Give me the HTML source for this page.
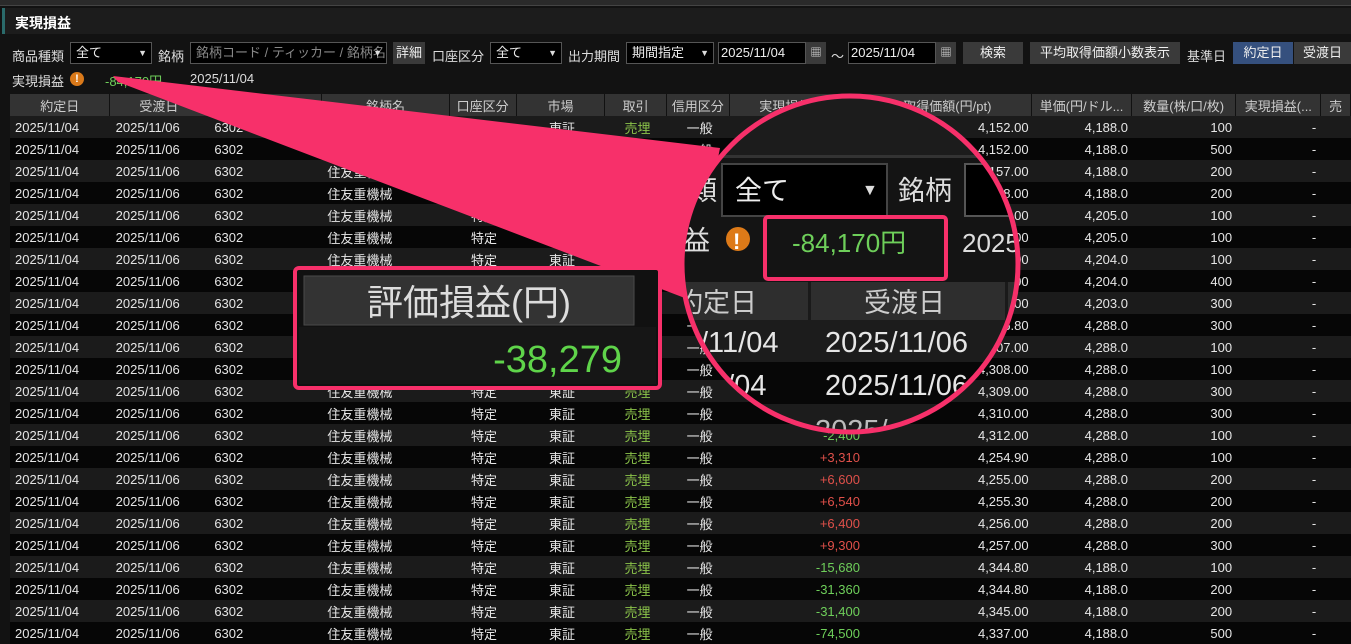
<!DOCTYPE html><html><head><meta charset="utf-8"><style>
*{margin:0;padding:0;box-sizing:border-box}
body{width:1351px;height:644px;background:#121212;font-family:"Liberation Sans","Noto Sans CJK JP",sans-serif;font-size:13px;color:#ddd;position:relative;overflow:hidden}
.a{position:absolute;white-space:nowrap}
.sel{position:absolute;background:#000;border:1px solid #555;color:#eee;height:22px;line-height:20px;padding-left:5px}
.dd:after{content:"▼";position:absolute;right:4px;font-size:9px;color:#ddd}
.btn{position:absolute;background:#3a3a3a;color:#eee;height:22px;line-height:22px;text-align:center}
table{position:absolute;left:10px;top:94px;border-collapse:collapse;table-layout:fixed}
th{background:#333;color:#ccc;font-weight:normal;height:22px;border-right:1px solid #111;font-size:13px;white-space:nowrap;overflow:hidden}
td{height:22px;padding:0 5px;white-space:nowrap;color:#e6e6e6}
tr:nth-child(odd) td{background:#1b1b1b}
tr:nth-child(even) td{background:#060606}
.r{text-align:right}.c{text-align:center}
.g{color:#6ecf5a}.rd{color:#e0504a}.u{color:#8bc34a}
</style></head><body>
<div class="a" style="left:0;top:0;width:1351px;height:6px;background:#2a2a2a;border-bottom:1px solid #444"></div>
<div class="a" style="left:2px;top:8px;width:1349px;height:26px;background:#1c1c1c;border-left:3px solid #2a6a6a"></div>
<div class="a" style="left:15px;top:13px;font-weight:bold;font-size:14px;color:#fff">実現損益</div>
<div class="a" style="left:12px;top:46px">商品種類</div>
<div class="sel dd" style="left:70px;top:42px;width:82px">全て</div>
<div class="a" style="left:158px;top:46px">銘柄</div>
<div class="sel dd" style="left:190px;top:42px;width:197px;color:#888;overflow:hidden">銘柄コード / ティッカー / 銘柄名</div>
<div class="btn" style="left:393px;top:42px;width:32px">詳細</div>
<div class="a" style="left:432px;top:46px">口座区分</div>
<div class="sel dd" style="left:490px;top:42px;width:72px">全て</div>
<div class="a" style="left:568px;top:46px">出力期間</div>
<div class="sel dd" style="left:626px;top:42px;width:88px">期間指定</div>
<div class="sel" style="left:718px;top:42px;width:88px;padding-left:2px">2025/11/04</div>
<div class="btn" style="left:806px;top:42px;width:20px;font-size:11px">▦</div>
<div class="a" style="left:831px;top:46px">～</div>
<div class="sel" style="left:848px;top:42px;width:88px;padding-left:2px">2025/11/04</div>
<div class="btn" style="left:936px;top:42px;width:20px;font-size:11px">▦</div>
<div class="btn" style="left:963px;top:42px;width:60px">検索</div>
<div class="btn" style="left:1030px;top:42px;width:150px">平均取得価額小数表示</div>
<div class="a" style="left:1187px;top:46px">基準日</div>
<div class="btn" style="left:1233px;top:42px;width:60px;background:#35507e">約定日</div>
<div class="btn" style="left:1294px;top:42px;width:57px">受渡日</div>
<div class="a" style="left:12px;top:71px">実現損益</div>
<div class="a" style="left:70px;top:72px;width:14px;height:14px;border-radius:7px;background:#d9791a;color:#fff;font-size:11px;text-align:center;line-height:14px;font-weight:bold">!</div>
<div class="a g" style="left:105px;top:71px">-84,170円</div>
<div class="a" style="left:190px;top:71px">2025/11/04</div>
<table>
<colgroup><col style="width:101px"><col style="width:99px"><col style="width:114px"><col style="width:129px"><col style="width:67px"><col style="width:90px"><col style="width:62px"><col style="width:63px"><col style="width:135px"><col style="width:170px"><col style="width:100px"><col style="width:105px"><col style="width:85px"><col style="width:30px"></colgroup>
<tr><th>約定日</th><th>受渡日</th><th>コード/ティッカー</th><th>銘柄名</th><th>口座区分</th><th>市場</th><th>取引</th><th>信用区分</th><th>実現損益(円)</th><th>取得価額(円/pt)</th><th>単価(円/ドル...</th><th>数量(株/口/枚)</th><th>実現損益(...</th><th>売</th></tr>
</table>
<table style="top:116px" id="t">
<colgroup><col style="width:101px"><col style="width:99px"><col style="width:114px"><col style="width:129px"><col style="width:67px"><col style="width:90px"><col style="width:62px"><col style="width:63px"><col style="width:135px"><col style="width:170px"><col style="width:100px"><col style="width:105px"><col style="width:85px"><col style="width:30px"></colgroup>
<tbody>
<tr><td>2025/11/04</td><td>2025/11/06</td><td>6302</td><td>住友重機械</td><td class="c">特定</td><td class="c">東証</td><td class="c u">売埋</td><td class="c">一般</td><td class="r g">-3,600</td><td class="r">4,152.00</td><td class="r">4,188.0</td><td class="r">100</td><td class="r">-</td><td></td></tr>
<tr><td>2025/11/04</td><td>2025/11/06</td><td>6302</td><td>住友重機械</td><td class="c">特定</td><td class="c">東証</td><td class="c u">売埋</td><td class="c">一般</td><td class="r rd">+18,000</td><td class="r">4,152.00</td><td class="r">4,188.0</td><td class="r">500</td><td class="r">-</td><td></td></tr>
<tr><td>2025/11/04</td><td>2025/11/06</td><td>6302</td><td>住友重機械</td><td class="c">特定</td><td class="c">東証</td><td class="c u">売埋</td><td class="c">一般</td><td class="r rd">+6,200</td><td class="r">4,157.00</td><td class="r">4,188.0</td><td class="r">200</td><td class="r">-</td><td></td></tr>
<tr><td>2025/11/04</td><td>2025/11/06</td><td>6302</td><td>住友重機械</td><td class="c">特定</td><td class="c">東証</td><td class="c u">売埋</td><td class="c">一般</td><td class="r rd">+6,000</td><td class="r">4,158.00</td><td class="r">4,188.0</td><td class="r">200</td><td class="r">-</td><td></td></tr>
<tr><td>2025/11/04</td><td>2025/11/06</td><td>6302</td><td>住友重機械</td><td class="c">特定</td><td class="c">東証</td><td class="c u">売埋</td><td class="c">一般</td><td class="r g">-1,700</td><td class="r">4,222.00</td><td class="r">4,205.0</td><td class="r">100</td><td class="r">-</td><td></td></tr>
<tr><td>2025/11/04</td><td>2025/11/06</td><td>6302</td><td>住友重機械</td><td class="c">特定</td><td class="c">東証</td><td class="c u">売埋</td><td class="c">一般</td><td class="r g">-1,700</td><td class="r">4,222.00</td><td class="r">4,205.0</td><td class="r">100</td><td class="r">-</td><td></td></tr>
<tr><td>2025/11/04</td><td>2025/11/06</td><td>6302</td><td>住友重機械</td><td class="c">特定</td><td class="c">東証</td><td class="c u">売埋</td><td class="c">一般</td><td class="r g">-1,800</td><td class="r">4,222.00</td><td class="r">4,204.0</td><td class="r">100</td><td class="r">-</td><td></td></tr>
<tr><td>2025/11/04</td><td>2025/11/06</td><td>6302</td><td>住友重機械</td><td class="c">特定</td><td class="c">東証</td><td class="c u">売埋</td><td class="c">一般</td><td class="r g">-7,200</td><td class="r">4,222.00</td><td class="r">4,204.0</td><td class="r">400</td><td class="r">-</td><td></td></tr>
<tr><td>2025/11/04</td><td>2025/11/06</td><td>6302</td><td>住友重機械</td><td class="c">特定</td><td class="c">東証</td><td class="c u">売埋</td><td class="c">一般</td><td class="r g">-5,700</td><td class="r">4,222.00</td><td class="r">4,203.0</td><td class="r">300</td><td class="r">-</td><td></td></tr>
<tr><td>2025/11/04</td><td>2025/11/06</td><td>6302</td><td>住友重機械</td><td class="c">特定</td><td class="c">東証</td><td class="c u">売埋</td><td class="c">一般</td><td class="r rd">+3,360</td><td class="r">4,276.80</td><td class="r">4,288.0</td><td class="r">300</td><td class="r">-</td><td></td></tr>
<tr><td>2025/11/04</td><td>2025/11/06</td><td>6302</td><td>住友重機械</td><td class="c">特定</td><td class="c">東証</td><td class="c u">売埋</td><td class="c">一般</td><td class="r rd">+8,100</td><td class="r">4,207.00</td><td class="r">4,288.0</td><td class="r">100</td><td class="r">-</td><td></td></tr>
<tr><td>2025/11/04</td><td>2025/11/06</td><td>6302</td><td>住友重機械</td><td class="c">特定</td><td class="c">東証</td><td class="c u">売埋</td><td class="c">一般</td><td class="r g">-2,000</td><td class="r">4,308.00</td><td class="r">4,288.0</td><td class="r">100</td><td class="r">-</td><td></td></tr>
<tr><td>2025/11/04</td><td>2025/11/06</td><td>6302</td><td>住友重機械</td><td class="c">特定</td><td class="c">東証</td><td class="c u">売埋</td><td class="c">一般</td><td class="r g">-6,300</td><td class="r">4,309.00</td><td class="r">4,288.0</td><td class="r">300</td><td class="r">-</td><td></td></tr>
<tr><td>2025/11/04</td><td>2025/11/06</td><td>6302</td><td>住友重機械</td><td class="c">特定</td><td class="c">東証</td><td class="c u">売埋</td><td class="c">一般</td><td class="r g">-6,600</td><td class="r">4,310.00</td><td class="r">4,288.0</td><td class="r">300</td><td class="r">-</td><td></td></tr>
<tr><td>2025/11/04</td><td>2025/11/06</td><td>6302</td><td>住友重機械</td><td class="c">特定</td><td class="c">東証</td><td class="c u">売埋</td><td class="c">一般</td><td class="r g">-2,400</td><td class="r">4,312.00</td><td class="r">4,288.0</td><td class="r">100</td><td class="r">-</td><td></td></tr>
<tr><td>2025/11/04</td><td>2025/11/06</td><td>6302</td><td>住友重機械</td><td class="c">特定</td><td class="c">東証</td><td class="c u">売埋</td><td class="c">一般</td><td class="r rd">+3,310</td><td class="r">4,254.90</td><td class="r">4,288.0</td><td class="r">100</td><td class="r">-</td><td></td></tr>
<tr><td>2025/11/04</td><td>2025/11/06</td><td>6302</td><td>住友重機械</td><td class="c">特定</td><td class="c">東証</td><td class="c u">売埋</td><td class="c">一般</td><td class="r rd">+6,600</td><td class="r">4,255.00</td><td class="r">4,288.0</td><td class="r">200</td><td class="r">-</td><td></td></tr>
<tr><td>2025/11/04</td><td>2025/11/06</td><td>6302</td><td>住友重機械</td><td class="c">特定</td><td class="c">東証</td><td class="c u">売埋</td><td class="c">一般</td><td class="r rd">+6,540</td><td class="r">4,255.30</td><td class="r">4,288.0</td><td class="r">200</td><td class="r">-</td><td></td></tr>
<tr><td>2025/11/04</td><td>2025/11/06</td><td>6302</td><td>住友重機械</td><td class="c">特定</td><td class="c">東証</td><td class="c u">売埋</td><td class="c">一般</td><td class="r rd">+6,400</td><td class="r">4,256.00</td><td class="r">4,288.0</td><td class="r">200</td><td class="r">-</td><td></td></tr>
<tr><td>2025/11/04</td><td>2025/11/06</td><td>6302</td><td>住友重機械</td><td class="c">特定</td><td class="c">東証</td><td class="c u">売埋</td><td class="c">一般</td><td class="r rd">+9,300</td><td class="r">4,257.00</td><td class="r">4,288.0</td><td class="r">300</td><td class="r">-</td><td></td></tr>
<tr><td>2025/11/04</td><td>2025/11/06</td><td>6302</td><td>住友重機械</td><td class="c">特定</td><td class="c">東証</td><td class="c u">売埋</td><td class="c">一般</td><td class="r g">-15,680</td><td class="r">4,344.80</td><td class="r">4,188.0</td><td class="r">100</td><td class="r">-</td><td></td></tr>
<tr><td>2025/11/04</td><td>2025/11/06</td><td>6302</td><td>住友重機械</td><td class="c">特定</td><td class="c">東証</td><td class="c u">売埋</td><td class="c">一般</td><td class="r g">-31,360</td><td class="r">4,344.80</td><td class="r">4,188.0</td><td class="r">200</td><td class="r">-</td><td></td></tr>
<tr><td>2025/11/04</td><td>2025/11/06</td><td>6302</td><td>住友重機械</td><td class="c">特定</td><td class="c">東証</td><td class="c u">売埋</td><td class="c">一般</td><td class="r g">-31,400</td><td class="r">4,345.00</td><td class="r">4,188.0</td><td class="r">200</td><td class="r">-</td><td></td></tr>
<tr><td>2025/11/04</td><td>2025/11/06</td><td>6302</td><td>住友重機械</td><td class="c">特定</td><td class="c">東証</td><td class="c u">売埋</td><td class="c">一般</td><td class="r g">-74,500</td><td class="r">4,337.00</td><td class="r">4,188.0</td><td class="r">500</td><td class="r">-</td><td></td></tr>
</tbody></table>

<svg class="a" style="left:0;top:0" width="1351" height="644">
<polygon points="113,76 720,148 690,300 118,82" fill="#f7306a"/>
<defs><clipPath id="cc"><circle cx="850" cy="264" r="168"/></clipPath></defs>
<g clip-path="url(#cc)">
<rect x="680" y="90" width="345" height="350" fill="#141414"/>
<rect x="680" y="90" width="345" height="65" fill="#1c1c1c"/>
<rect x="680" y="155" width="345" height="3" fill="#333"/>
<rect x="722" y="164" width="165" height="52" fill="#000" stroke="#444" stroke-width="2"/>
<text x="735" y="200" fill="#eee" font-size="27" font-family="Noto Sans CJK JP,sans-serif">全て</text>
<text x="862" y="195" fill="#ddd" font-size="16">▼</text>
<text x="690" y="200" fill="#ddd" font-size="27" font-family="Noto Sans CJK JP,sans-serif">類</text>
<text x="898" y="200" fill="#ddd" font-size="27" font-family="Noto Sans CJK JP,sans-serif">銘柄</text>
<rect x="965" y="164" width="60" height="52" fill="#000" stroke="#555" stroke-width="2"/>
<text x="683" y="250" fill="#ddd" font-size="27" font-family="Noto Sans CJK JP,sans-serif">益</text>
<circle cx="738" cy="239" r="12" fill="#dd7a18"/>
<text x="733" y="249" fill="#fff" font-size="22" font-weight="bold">!</text>
<text x="792" y="252" fill="#6ecf5a" font-size="26" font-family="Liberation Sans,Noto Sans CJK JP,sans-serif">-84,170円</text>
<text x="962" y="252" fill="#ddd" font-size="26">2025</text>
<rect x="680" y="282" width="345" height="38" fill="#2e2e2e"/>
<rect x="808" y="282" width="3" height="38" fill="#1a1a1a"/>
<rect x="1005" y="282" width="3" height="38" fill="#1a1a1a"/>
<text x="676" y="312" fill="#ccc" font-size="27" font-family="Noto Sans CJK JP,sans-serif">約定日</text>
<text x="864" y="312" fill="#ccc" font-size="27" font-family="Noto Sans CJK JP,sans-serif">受渡日</text>
<rect x="680" y="320" width="345" height="42" fill="#1c1c1c"/>
<text x="700" y="352" fill="#e6e6e6" font-size="29">/11/04</text>
<text x="825" y="352" fill="#e6e6e6" font-size="29">2025/11/06</text>
<rect x="680" y="362" width="345" height="42" fill="#070707"/>
<text x="710" y="395" fill="#e6e6e6" font-size="29">1/04</text>
<text x="825" y="395" fill="#e6e6e6" font-size="29">2025/11/06</text>
<rect x="680" y="404" width="345" height="42" fill="#1c1c1c"/>
<text x="815" y="440" fill="#bbb" font-size="29">2025/</text>
<rect x="765" y="217" width="181" height="62" rx="3" fill="none" stroke="#f7306a" stroke-width="4"/>
</g>
<circle cx="850" cy="264" r="168" fill="none" stroke="#f7306a" stroke-width="5"/>
<rect x="295" y="268" width="365" height="120" rx="4" fill="#111" stroke="#f7306a" stroke-width="4"/>
<rect x="304" y="276" width="330" height="49" fill="#333" stroke="#4a4a4a"/>
<text x="469" y="315" fill="#ddd" font-size="36" text-anchor="middle" font-family="Liberation Sans,Noto Sans CJK JP,sans-serif">評価損益(円)</text>
<rect x="299" y="327" width="357" height="57" fill="#161616"/>
<text x="622" y="372" fill="#5fd44a" font-size="38" text-anchor="end">-38,279</text>
</svg>
</body></html>
